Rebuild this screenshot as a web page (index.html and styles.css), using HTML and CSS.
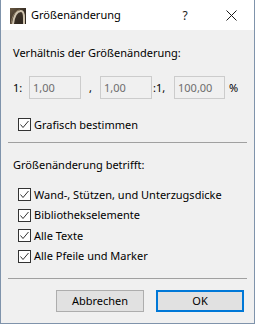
FILE: index.html
```html
<!DOCTYPE html>
<html lang="de">
<head>
<meta charset="utf-8">
<title>Größenänderung</title>
<link rel="stylesheet" href="styles.css">
</head>
<body>
<div class="window">
  <div class="titlebar">
    <svg class="appicon" width="16" height="16" viewBox="0 0 16 16">
      <defs>
        <linearGradient id="g" x1="0" y1="0" x2="1" y2="1">
          <stop offset="0" stop-color="#6b5a43"/>
          <stop offset="0.5" stop-color="#3a3026"/>
          <stop offset="1" stop-color="#2a231c"/>
        </linearGradient>
      </defs>
      <rect x="0" y="0" width="16" height="16" fill="url(#g)"/>
      <path d="M3 16 C4 8 7 3 11 3 C13 3 14 6 14 10 L14 16" fill="none" stroke="#cfc3ae" stroke-width="2"/>
      <path d="M1 16 C2 7 6 2 10 2" fill="none" stroke="#8d7b60" stroke-width="1"/>
    </svg>
    <span class="title">Größenänderung</span>
    <span class="tbtn help">?</span>
    <span class="tbtn close">
      <svg width="11" height="11" viewBox="0 0 11 11"><path d="M0.5 0.5 L10.5 10.5 M10.5 0.5 L0.5 10.5" stroke="#1a1a1a" stroke-width="1"/></svg>
    </span>
  </div>
  <div class="content">
    <div class="label first">Verhältnis der Größenänderung:</div>
    <div class="ratio">
      <span class="r-one">1:</span>
      <span class="field w52">1,00</span>
      <span class="r-comma">,</span>
      <span class="field w52">1,00</span>
      <span class="r-colon">:1,</span>
      <span class="field w51">100,00</span>
      <span class="r-pct">%</span>
    </div>
    <div class="check single">
      <svg class="box" width="13" height="13" viewBox="0 0 13 13"><rect x="0.5" y="0.5" width="12" height="12" fill="#fff" stroke="#333"/><path d="M2.5 6.5 L5 9.5 L10.5 3" fill="none" stroke="#333" stroke-width="1"/></svg>
      <span>Grafisch bestimmen</span>
    </div>
    <div class="sep sep1"></div>
    <div class="label second">Größenänderung betrifft:</div>
    <div class="checks">
      <div class="check">
        <svg class="box" width="13" height="13" viewBox="0 0 13 13"><rect x="0.5" y="0.5" width="12" height="12" fill="#fff" stroke="#333"/><path d="M2.5 6.5 L5 9.5 L10.5 3" fill="none" stroke="#333" stroke-width="1"/></svg>
        <span>Wand-, Stützen, und Unterzugsdicke</span>
      </div>
      <div class="check">
        <svg class="box" width="13" height="13" viewBox="0 0 13 13"><rect x="0.5" y="0.5" width="12" height="12" fill="#fff" stroke="#333"/><path d="M2.5 6.5 L5 9.5 L10.5 3" fill="none" stroke="#333" stroke-width="1"/></svg>
        <span>Bibliothekselemente</span>
      </div>
      <div class="check">
        <svg class="box" width="13" height="13" viewBox="0 0 13 13"><rect x="0.5" y="0.5" width="12" height="12" fill="#fff" stroke="#333"/><path d="M2.5 6.5 L5 9.5 L10.5 3" fill="none" stroke="#333" stroke-width="1"/></svg>
        <span>Alle Texte</span>
      </div>
      <div class="check">
        <svg class="box" width="13" height="13" viewBox="0 0 13 13"><rect x="0.5" y="0.5" width="12" height="12" fill="#fff" stroke="#333"/><path d="M2.5 6.5 L5 9.5 L10.5 3" fill="none" stroke="#333" stroke-width="1"/></svg>
        <span>Alle Pfeile und Marker</span>
      </div>
    </div>
    <div class="sep sep2"></div>
    <div class="buttons">
      <span class="btn">Abbrechen</span>
      <span class="btn default">OK</span>
    </div>
  </div>
</div>
</body>
</html>
```

FILE: styles.css
```css
html, body {
  margin: 0;
  padding: 0;
  background: #f0f0f0;
}
body {
  font-family: "Noto Sans", "Open Sans", sans-serif;
  font-size: 11px;
  color: #000;
}
.window {
  width: 255px;
  height: 324px;
  box-sizing: border-box;
  border: 1px solid #7f93ab;
  border-top: none;
  background: #f0f0f0;
  display: flex;
  flex-direction: column;
}
.titlebar {
  height: 30px;
  background: #fff;
  display: flex;
  align-items: flex-start;
  flex: none;
}
.appicon {
  margin: 8px 0 0 9px;
  flex: none;
}
.title {
  margin: 7px 0 0 5px;
  line-height: 16px;
  font-size: 11px;
  color: #000;
  flex: 1;
}
.tbtn {
  width: 46px;
  height: 30px;
  display: flex;
  align-items: center;
  justify-content: center;
  flex: none;
}
.help {
  font-size: 12px;
  color: #1a1a1a;
}
.close svg {
  margin-top: 1px;
}
.content {
  flex: 1;
  display: flex;
  flex-direction: column;
}
.label {
  line-height: 16px;
  padding-left: 12px;
}
.first {
  margin-top: 15px;
}
.ratio {
  display: flex;
  align-items: center;
  height: 23px;
  margin-top: 15px;
  padding-left: 12px;
}
.r-one { width: 16px; }
.r-comma { width: 19px; text-align: center; }
.r-colon { width: 22px; padding-left: 1px; box-sizing: border-box; }
.r-pct { padding-left: 4px; }
.field {
  height: 23px;
  box-sizing: border-box;
  border: 1px solid #cccccc;
  background: #f0f0f0;
  color: #6d6d6d;
  line-height: 21px;
  padding-left: 3px;
}
.w52 { width: 52px; }
.w51 { width: 51px; }
.check {
  display: flex;
  align-items: center;
  height: 13px;
  padding-left: 17px;
  line-height: 16px;
}
.check .box {
  flex: none;
  margin-right: 3px;
}
.single {
  margin-top: 19px;
}
.sep {
  height: 1px;
  background: #a0a0a0;
  margin-left: 7px;
  margin-right: 7px;
}
.sep1 {
  margin-top: 11px;
}
.second {
  margin-top: 14px;
}
.checks {
  display: flex;
  flex-direction: column;
  gap: 7.67px;
  margin-top: 15px;
}
.sep2 {
  margin-top: 15px;
}
.buttons {
  display: flex;
  justify-content: flex-end;
  gap: 12px;
  margin-top: 11px;
  padding-right: 10px;
}
.btn {
  width: 88px;
  height: 22px;
  box-sizing: border-box;
  border: 1px solid #adadad;
  background: #e1e1e1;
  display: flex;
  align-items: center;
  justify-content: center;
}
.default {
  border: 2px solid #0078d7;
}
```
